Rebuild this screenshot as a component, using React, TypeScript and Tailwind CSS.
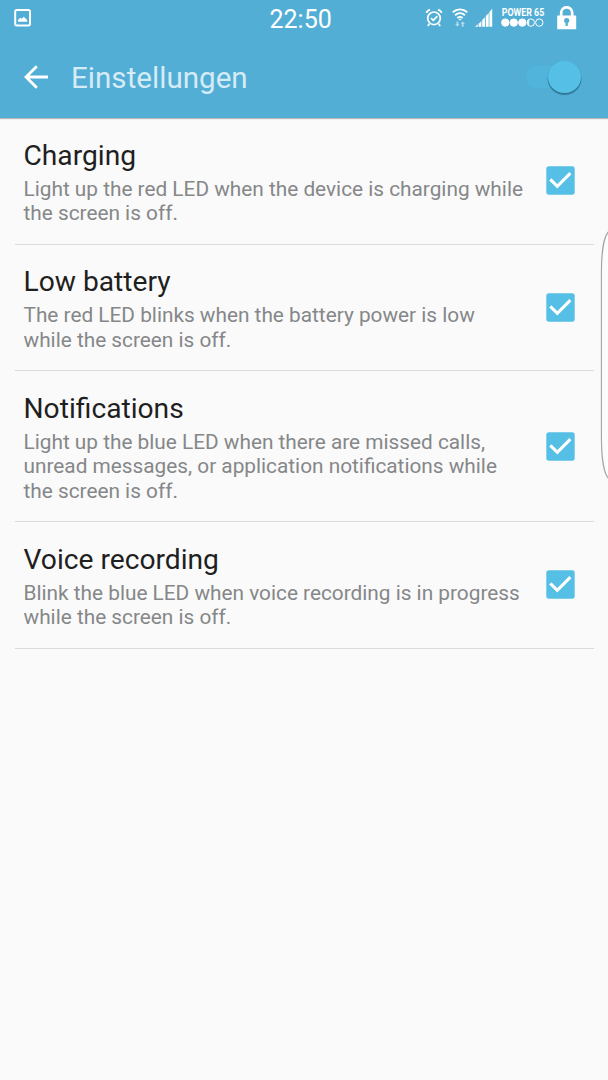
import { useState } from "react";

interface LedSetting {
  id: string;
  title: string;
  lines: string[];
}

const LED_SETTINGS: LedSetting[] = [
  {
    id: "charging",
    title: "Charging",
    lines: [
      "Light up the red LED when the device is charging while",
      "the screen is off.",
    ],
  },
  {
    id: "low-battery",
    title: "Low battery",
    lines: [
      "The red LED blinks when the battery power is low",
      "while the screen is off.",
    ],
  },
  {
    id: "notifications",
    title: "Notifications",
    lines: [
      "Light up the blue LED when there are missed calls,",
      "unread messages, or application notifications while",
      "the screen is off.",
    ],
  },
  {
    id: "voice-recording",
    title: "Voice recording",
    lines: [
      "Blink the blue LED when voice recording is in progress",
      "while the screen is off.",
    ],
  },
];

function PictureIcon() {
  return (
    <svg width="18" height="18" viewBox="0 0 18 18" fill="none">
      <rect x="1.2" y="1" width="14.8" height="15.4" rx="1.6" stroke="#fff" strokeWidth="2" />
      <path d="M4 12.8V11L6.2 8.8L7.8 9.8L9.8 7.8L13.2 11V12.8Z" fill="#fff" />
    </svg>
  );
}

function AlarmIcon() {
  return (
    <svg width="18" height="20" viewBox="0 0 18 20" fill="none" stroke="#fff">
      <circle cx="9" cy="10.3" r="6.3" strokeWidth="1.7" />
      <path d="M1.2 4.7A8 8 0 0 1 5 1.7M13 1.7A8 8 0 0 1 16.8 4.7" strokeWidth="1.8" />
      <path d="M4.4 15.8L2.8 18M13.6 15.8L15.2 18" strokeWidth="1.7" />
      <path d="M6 10.2L8.3 12.3L12.4 8.2" strokeWidth="1.7" />
    </svg>
  );
}

function WifiIcon() {
  return (
    <svg width="16" height="20" viewBox="0 0 16 20" fill="none" stroke="#fff">
      <path d="M0.7 4.3C5 0.4 11 0.4 15.3 4.3" strokeWidth="1.9" />
      <path d="M3 7.2C6 4.6 10 4.6 13 7.2" strokeWidth="1.9" />
      <path d="M5.3 9.9C7 8.6 9 8.6 10.7 9.9" strokeWidth="1.9" />
      <path d="M6.3 10.7H9.7L8 12.8Z" fill="#fff" stroke="none" />
      <g opacity="0.55" fill="#fff" stroke="none">
        <path d="M4.5 13.4H6.3V16H7.6L5.4 18.8L3.2 16H4.5Z" />
        <path d="M9.8 18.8H11.6V16H12.9L10.7 13.2L8.5 16H9.8Z" />
      </g>
    </svg>
  );
}

function SignalIcon() {
  return (
    <svg width="18" height="20" viewBox="0 0 18 20" fill="#fff">
      <path d="M0 18.7L2.8 16.2V18.7ZM3.6 15.7L6.4 13.2V18.7H3.6ZM7.2 12L10 9.2V18.7H7.2ZM10.8 8L13.7 5V18.7H10.8ZM14.4 3.9L17.2 0.8V18.7H14.4Z" />
    </svg>
  );
}

function PowerMeter() {
  return (
    <div className="flex w-[43px] flex-col items-center">
      <span className="scale-x-[0.82] text-[10.8px] leading-[10px] font-bold whitespace-nowrap">
        POWER 65
      </span>
      <svg width="43" height="9" viewBox="0 0 43 9" stroke="#fff">
        {[4.3, 12.8, 21.3, 29.8, 38.3].map((cx, index) => (
          <circle
            key={cx}
            cx={cx}
            cy="4.6"
            r="3.7"
            strokeWidth="1"
            fill={index < 3 ? "#fff" : "none"}
          />
        ))}
        <path d="M27.8 1.9V7.3L26.7 6.3V2.8Z" fill="#fff" strokeWidth="0.6" />
      </svg>
    </div>
  );
}

function LockIcon() {
  return (
    <svg width="20" height="24" viewBox="0 0 20 24" fill="none">
      <path d="M4.2 11V6.8A5.5 5.5 0 0 1 15.2 6.8V11" stroke="#fff" strokeWidth="2.7" />
      <rect x="0.2" y="9.5" width="19" height="13.8" rx="0.5" fill="#fff" />
      <circle cx="9.7" cy="14.6" r="2.6" fill="#52aed5" />
      <path d="M8.6 15H10.8V20H8.6Z" fill="#52aed5" />
    </svg>
  );
}

function StatusBar() {
  return (
    <div className="flex h-[37px] items-start text-white">
      <div className="w-[269.5px] pt-[9px] pl-[13.5px]">
        <PictureIcon />
      </div>
      <span className="pt-[3.5px] text-[25px] leading-8">22:50</span>
      <div className="ml-auto flex items-start pr-[31px]">
        <div className="mt-2">
          <AlarmIcon />
        </div>
        <div className="mt-[7.5px] ml-[9.5px]">
          <WifiIcon />
        </div>
        <div className="mt-2 ml-[6.5px]">
          <SignalIcon />
        </div>
        <div className="mt-2 ml-[8.5px]">
          <PowerMeter />
        </div>
        <div className="mt-[5.5px] ml-[13px]">
          <LockIcon />
        </div>
      </div>
    </div>
  );
}

function MasterSwitch({ on, onToggle }: { on: boolean; onToggle: () => void }) {
  return (
    <button
      type="button"
      role="switch"
      aria-checked={on}
      aria-label="LED"
      onClick={onToggle}
      className="flex h-[22px] w-[55px] items-center justify-end rounded-full bg-[#51b4db]"
    >
      <span className="h-[32.5px] w-[32.5px] shrink-0 rounded-full bg-[#56bfe5] shadow-[0_1.5px_1px_0.3px_rgba(25,85,110,0.65)]" />
    </button>
  );
}

function Checkbox({
  label,
  checked,
  onToggle,
}: {
  label: string;
  checked: boolean;
  onToggle: () => void;
}) {
  return (
    <button
      type="button"
      role="checkbox"
      aria-checked={checked}
      aria-label={label}
      onClick={onToggle}
      className="mb-[3.5px] h-[29px] w-[29px] shrink-0"
    >
      <svg width="29" height="29" viewBox="0 0 29 29" fill="none">
        <rect x="0.3" y="0.3" width="28.4" height="28.4" rx="2.6" fill="#56bfe5" />
        {checked && (
          <path d="M4.3 13.4L11.3 20.3L24.4 7.2" stroke="#fff" strokeWidth="3.1" />
        )}
      </svg>
    </button>
  );
}

function SettingRow({ setting }: { setting: LedSetting }) {
  const [checked, setChecked] = useState(true);

  return (
    <li className="mx-[14.5px] flex items-center justify-between border-b border-[#d9dbdb] pt-[21.8px] pr-[18.5px] pb-[18.2px] pl-[9px]">
      <div className="whitespace-nowrap">
        <h2 className="text-[28.2px] leading-8 text-[#1f1f1f]">{setting.title}</h2>
        <p className="mt-[5px] text-[20.8px] leading-[24.3px] text-[#858789]">
          {setting.lines.map((line) => (
            <span key={line} className="block">
              {line}
            </span>
          ))}
        </p>
      </div>
      <Checkbox
        label={setting.title}
        checked={checked}
        onToggle={() => setChecked(!checked)}
      />
    </li>
  );
}

export default function App() {
  const [enabled, setEnabled] = useState(true);

  return (
    <div className="relative h-[1080px] w-[608px] overflow-hidden bg-[#fafafa] font-['Roboto',sans-serif]">
      <header className="h-[118px] bg-[#52aed5] shadow-[0_1px_1px_rgba(0,0,0,0.25)]">
        <StatusBar />
        <div className="flex h-20 items-center pr-[27.5px] pl-6">
          <button type="button" aria-label="Zurück">
            <svg width="24" height="24" viewBox="0 0 24 24" fill="none">
              <path d="M24 12H2M12.8 1.2L2 12L12.8 22.8" stroke="#fff" strokeWidth="2.8" />
            </svg>
          </button>
          <h1 className="mt-px ml-[23px] text-[29.6px] leading-9 text-[#d5ebf5]">
            Einstellungen
          </h1>
          <div className="ml-auto">
            <MasterSwitch on={enabled} onToggle={() => setEnabled(!enabled)} />
          </div>
        </div>
      </header>
      <ul>
        {LED_SETTINGS.map((setting) => (
          <SettingRow key={setting.id} setting={setting} />
        ))}
      </ul>
      {/* edge panel handle, floats over the list */}
      <svg
        className="absolute top-[228px] right-0"
        width="8"
        height="254"
        viewBox="0 0 8 254"
        fill="none"
      >
        <path
          d="M9 3C3 9 1.4 24 1.4 48V206C1.4 230 3 245 9 251"
          fill="#fcfcfc"
          stroke="#a3a5a5"
          strokeWidth="1.1"
        />
      </svg>
    </div>
  );
}
